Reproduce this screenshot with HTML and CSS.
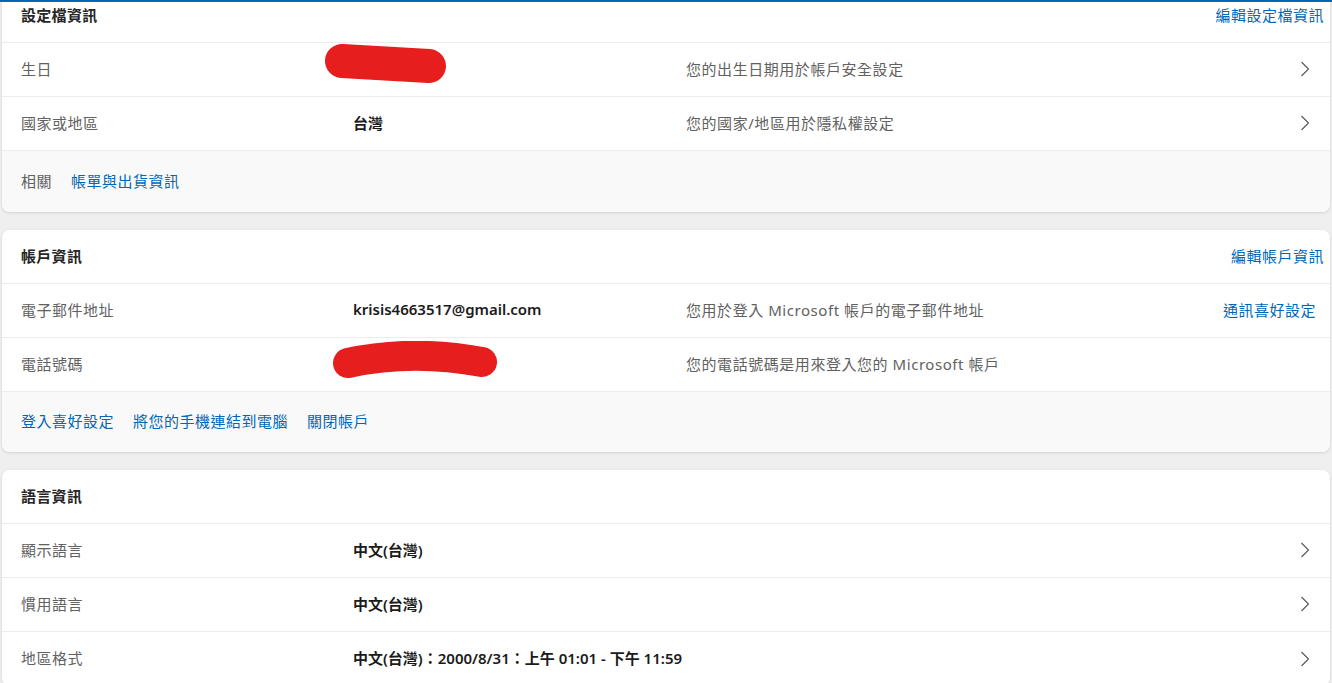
FILE: index.html
```html
<!DOCTYPE html>
<html lang="zh-Hant">
<head>
  <meta charset="UTF-8">
  <title>您的資訊</title>
  <link rel="stylesheet" href="styles.css">
</head>
<body>
  <!-- top accent line of the app bar -->
  <div class="topLine"></div>

  <div class="page">
    <!-- Profile info -->
    <section class="card">
      <div class="cardHead">
        <h2>設定檔資訊</h2>
        <a href="#" class="link headLink">編輯設定檔資訊</a>
      </div>
      <div class="row">
        <span class="label">生日</span>
        <span class="value">
          <svg class="blot blotOne" width="122" height="40" viewBox="0 0 122 40">
            <path d="M17 17 L104 22" stroke="#e61e1e" stroke-width="34" stroke-linecap="round" fill="none"/>
          </svg>
        </span>
        <span class="desc">您的出生日期用於帳戶安全設定</span>
        <span class="chev"><svg width="10" height="16" viewBox="0 0 10 16"><path d="M1.5 1 L8.5 8 L1.5 15" stroke="#555" stroke-width="1.1" fill="none"/></svg></span>
      </div>
      <div class="row">
        <span class="label">國家或地區</span>
        <span class="value">台灣</span>
        <span class="desc">您的國家/地區用於隱私權設定</span>
        <span class="chev"><svg width="10" height="16" viewBox="0 0 10 16"><path d="M1.5 1 L8.5 8 L1.5 15" stroke="#555" stroke-width="1.1" fill="none"/></svg></span>
      </div>
      <div class="cardFoot tallFoot">
        <span class="label">相關</span>
        <a href="#" class="link">帳單與出貨資訊</a>
      </div>
    </section>

    <!-- Account info -->
    <section class="card">
      <div class="cardHead">
        <h2>帳戶資訊</h2>
        <a href="#" class="link headLink">編輯帳戶資訊</a>
      </div>
      <div class="row">
        <span class="label">電子郵件地址</span>
        <span class="value">krisis4663517@gmail.com</span>
        <span class="desc">您用於登入 Microsoft 帳戶的電子郵件地址</span>
        <a href="#" class="link rowLink">通訊喜好設定</a>
      </div>
      <div class="row">
        <span class="label">電話號碼</span>
        <span class="value">
          <svg class="blot blotTwo" width="166" height="38" viewBox="0 0 166 38">
            <path d="M16 22 Q80 8 150 21" stroke="#e61e1e" stroke-width="30" stroke-linecap="round" fill="none"/>
          </svg>
        </span>
        <span class="desc">您的電話號碼是用來登入您的 Microsoft 帳戶</span>
        <span></span>
      </div>
      <div class="cardFoot">
        <a href="#" class="link">登入喜好設定</a>
        <a href="#" class="link">將您的手機連結到電腦</a>
        <a href="#" class="link">關閉帳戶</a>
      </div>
    </section>

    <!-- Language info -->
    <section class="card">
      <div class="cardHead">
        <h2>語言資訊</h2>
      </div>
      <div class="row">
        <span class="label">顯示語言</span>
        <span class="value">中文(台灣)</span>
        <span class="desc"></span>
        <span class="chev"><svg width="10" height="16" viewBox="0 0 10 16"><path d="M1.5 1 L8.5 8 L1.5 15" stroke="#555" stroke-width="1.1" fill="none"/></svg></span>
      </div>
      <div class="row">
        <span class="label">慣用語言</span>
        <span class="value">中文(台灣)</span>
        <span class="desc"></span>
        <span class="chev"><svg width="10" height="16" viewBox="0 0 10 16"><path d="M1.5 1 L8.5 8 L1.5 15" stroke="#555" stroke-width="1.1" fill="none"/></svg></span>
      </div>
      <div class="row">
        <span class="label">地區格式</span>
        <span class="value">中文(台灣)：2000/8/31：上午 01:01 - 下午 11:59</span>
        <span class="desc"></span>
        <span class="chev"><svg width="10" height="16" viewBox="0 0 10 16"><path d="M1.5 1 L8.5 8 L1.5 15" stroke="#555" stroke-width="1.1" fill="none"/></svg></span>
      </div>
    </section>
  </div>
</body>
</html>
```

FILE: styles.css
```css
/* Base page */
body {
  margin: 0;
  background: #efefef;
  font-family: "Noto Sans", "Noto Sans CJK TC", sans-serif;
  font-size: 15px;
  color: #1b1b1b;
  overflow: hidden;
}
/* blue line along the top edge */
.topLine {
  position: fixed;
  top: 0;
  left: 0;
  right: 0;
  height: 2px;
  background: #0067b8;
  z-index: 5;
}
/* page is scrolled a little, first card starts above the window */
.page {
  margin-top: -11px;
  padding: 0 2px;
  display: flex;
  flex-direction: column;
  gap: 18px;
}
/* Cards */
.card {
  background: #ffffff;
  border-radius: 8px;
  box-shadow: 0 1px 3px rgba(0, 0, 0, 0.13);
  overflow: hidden;
}
.cardHead {
  height: 53px;
  box-sizing: border-box;
  height: 54px;
  display: flex;
  align-items: center;
  justify-content: space-between;
  padding: 0 6px 2px 19px;
  border-bottom: 1px solid #ececec;
}
.cardHead h2 {
  margin: 0;
  font-size: 15px;
  font-weight: 600;
  color: #262626;
  letter-spacing: 0.3px;
}
/* Rows */
.row {
  box-sizing: border-box;
  height: 54px;
  display: grid;
  grid-template-columns: 332px 333px 1fr auto;
  align-items: center;
  padding: 0 19px 3px;
  border-bottom: 1px solid #ececec;
}
.card > .row:last-child {
  border-bottom: none;
}
.label {
  color: #616161;
  letter-spacing: 0.5px;
}
.value {
  font-weight: 600;
  color: #1b1b1b;
  display: flex;
  align-items: center;
}
.desc {
  color: #616161;
  letter-spacing: 0.55px;
}
.chev {
  display: flex;
  align-items: center;
  padding-right: 1px;
  margin-top: 2px;
}
/* Links */
.link {
  color: #0067b8;
  text-decoration: none;
  letter-spacing: 0.5px;
}
.rowLink {
  margin-right: -5px;
}
/* redacted values */
.blot {
  display: block;
}
.blotOne {
  margin-left: -28px;
  margin-top: -9px;
}
.blotTwo {
  margin-left: -21px;
  margin-top: -6px;
}
/* Card footer */
.cardFoot {
  box-sizing: border-box;
  height: 60px;
  background: #f9f9f9;
  display: flex;
  align-items: center;
  gap: 19px;
  padding: 0 19px 3px;
}
.tallFoot {
  height: 61px;
}
```
